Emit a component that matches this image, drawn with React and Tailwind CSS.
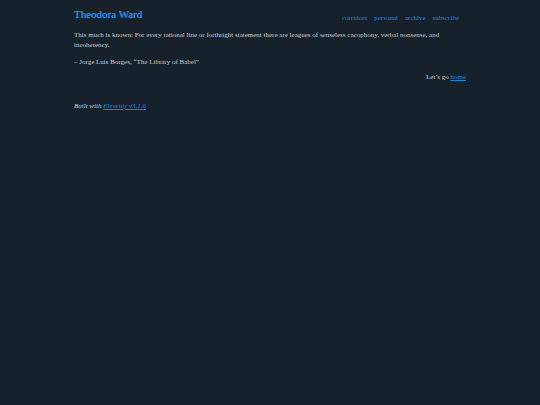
import React from 'react';

const NAV = [
  { label: 'corridors', href: '#corridors' },
  { label: 'personal', href: '#personal' },
  { label: 'archive', href: '#archive' },
  { label: 'subscribe', href: '#subscribe' },
];

export default function App() {
  return (
    <div className="min-h-screen bg-[#17212c] px-4 font-['Liberation_Serif',serif] text-[7px] leading-[10px] text-[#c9cbcd]">
      <div className="mx-auto max-w-[392px]">
        <SiteHeader />
        <main className="pt-[7px]">
          <blockquote>
            <p>
              This much is known: For every rational line or forthright statement there are leagues
              of senseless cacophony, verbal nonsense, and incoherency.
            </p>
            <p className="mt-[7px]">– Jorge Luis Borges, “The Library of Babel”</p>
          </blockquote>
          <p className="mt-[5px] text-right">
            Let’s go <TextLink href="#home">home</TextLink>
          </p>
        </main>
        <footer className="mt-[19px] italic">
          Built with <TextLink href="#eleventy">Eleventy v3.1.6</TextLink>
        </footer>
      </div>
    </div>
  );
}

const SiteHeader = () => (
  <header className="flex items-end justify-between pt-[7px]">
    <h1 className="pb-[2px] text-[11px] leading-[14px] text-shadow-[0_0_1px_#1e90f5]">
      <a href="#top" className="text-[#1e90f5]">
        Theodora Ward
      </a>
    </h1>
    <nav className="flex gap-[7px] pr-[7px]">
      {NAV.map((item) => (
        <a key={item.label} href={item.href} className="text-[#1a86e0]">
          {item.label}
        </a>
      ))}
    </nav>
  </header>
);

const TextLink = ({ href, children }) => (
  <a href={href} className="text-[#1a86e0] underline">
    {children}
  </a>
);
